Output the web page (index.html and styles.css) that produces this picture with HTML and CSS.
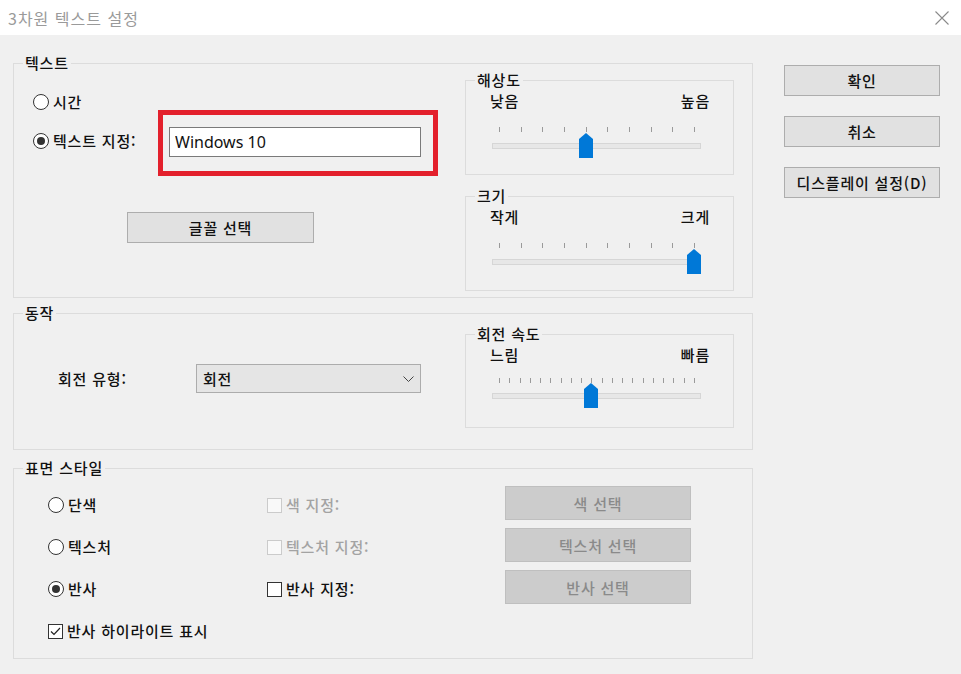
FILE: index.html
```html
<!DOCTYPE html>
<html lang="ko">
	<head>
		<meta charset="utf-8" />
		<title>3차원 텍스트 설정</title>
		<link rel="stylesheet" href="styles.css">
	</head>
	<body>
		<div class="titlebar">
			<span class="title">3차원 텍스트 설정</span>
			<svg class="close" width="14" height="14" viewBox="0 0 14 14"><path d="M0.5 0.5L13.5 13.5M13.5 0.5L0.5 13.5" stroke="#8a8a8a" stroke-width="1.1" fill="none"/></svg>
		</div>
		<div class="dialog">
			<div class="groups">
				<fieldset class="group g-text">
					<legend>텍스트</legend>
					<div class="group-body">
						<div class="text-left">
							<label class="radio r-time"><span class="mark"></span>시간</label>
							<div class="text-row">
								<label class="radio r-custom checked"><span class="mark"></span>텍스트 지정:</label>
								<div class="highlight"><input class="textbox" type="text" value="Windows 10"></div>
							</div>
							<button class="btn font-btn">글꼴 선택</button>
						</div>
						<div class="side-sliders">
							<fieldset class="group sub">
								<legend>해상도</legend>
								<div class="labels"><span>낮음</span><span>높음</span></div>
								<div class="ticks"><i></i><i></i><i></i><i></i><i></i><i></i><i></i><i></i><i></i><i></i></div>
								<div class="track"><svg class="thumb" style="--v: 0.4444" width="14" height="25" viewBox="0 0 14 25"><polygon points="0,6 7,0 14,6 14,25 0,25" fill="#0078d7"/></svg></div>
							</fieldset>
							<fieldset class="group sub sub-size">
								<legend>크기</legend>
								<div class="labels"><span>작게</span><span>크게</span></div>
								<div class="ticks"><i></i><i></i><i></i><i></i><i></i><i></i><i></i><i></i><i></i><i></i></div>
								<div class="track"><svg class="thumb" style="--v: 1" width="14" height="25" viewBox="0 0 14 25"><polygon points="0,6 7,0 14,6 14,25 0,25" fill="#0078d7"/></svg></div>
							</fieldset>
						</div>
					</div>
				</fieldset>

				<fieldset class="group g-motion">
					<legend>동작</legend>
					<div class="group-body">
						<div class="motion-left">
							<span class="motion-label">회전 유형:</span>
							<div class="select">
								<span>회전</span>
								<svg width="11" height="6" viewBox="0 0 11 6"><path d="M0.5 0.5L5.5 5.5L10.5 0.5" stroke="#444" stroke-width="1" fill="none"/></svg>
							</div>
						</div>
						<div class="side-sliders">
							<fieldset class="group sub sub-speed">
								<legend>회전 속도</legend>
								<div class="labels"><span>느림</span><span>빠름</span></div>
								<div class="ticks"><i></i><i></i><i></i><i></i><i></i><i></i><i></i><i></i><i></i><i></i><i></i><i></i><i></i><i></i><i></i><i></i><i></i><i></i><i></i><i></i></div>
								<div class="track"><svg class="thumb" style="--v: 0.4737" width="14" height="25" viewBox="0 0 14 25"><polygon points="0,6 7,0 14,6 14,25 0,25" fill="#0078d7"/></svg></div>
							</fieldset>
						</div>
					</div>
				</fieldset>

				<fieldset class="group g-surface">
					<legend>표면 스타일</legend>
					<div class="surface-grid">
						<label class="radio"><span class="mark"></span>단색</label>
						<label class="check disabled"><span class="box"></span>색 지정:</label>
						<button class="btn pick" disabled>색 선택</button>

						<label class="radio"><span class="mark"></span>텍스처</label>
						<label class="check disabled"><span class="box"></span>텍스처 지정:</label>
						<button class="btn pick" disabled>텍스처 선택</button>

						<label class="radio checked"><span class="mark"></span>반사</label>
						<label class="check"><span class="box"></span>반사 지정:</label>
						<button class="btn pick" disabled>반사 선택</button>

						<label class="check checked highlight-row"><span class="box"><svg width="13" height="13" viewBox="0 0 13 13"><path d="M2 6.5L5 9.5L11 3" stroke="#222" stroke-width="1.2" fill="none"/></svg></span>반사 하이라이트 표시</label>
					</div>
				</fieldset>
			</div>

			<div class="side">
				<button class="btn">확인</button>
				<button class="btn">취소</button>
				<button class="btn">디스플레이 설정(D)</button>
			</div>
		</div>
	</body>
</html>
```

FILE: styles.css
```css
body {
	margin: 0;
	background: #f0f0f0;
	font-family: "Noto Sans CJK KR", "Noto Sans", sans-serif;
	font-size: 15px;
	font-weight: 500;
	letter-spacing: 0.8px;
	color: #111;
}

.titlebar {
	height: 35px;
	background: #fff;
	display: flex;
	align-items: center;
	justify-content: space-between;
	padding: 0 12px 0 8px;
}

.title {
	color: #9a9a9a;
	font-size: 16px;
	font-weight: 400;
	letter-spacing: 1px;
}

.dialog {
	display: flex;
	gap: 31px;
	padding: 18px 0 0 13px;
}

.groups {
	width: 740px;
	display: flex;
	flex-direction: column;
}

.group {
	margin: 0;
	padding: 0;
	border: 1px solid #dcdcdc;
	box-sizing: border-box;
	min-width: 0;
}

legend {
	margin-left: 9px;
	padding: 0 2px;
	line-height: 20px;
}

.group-body {
	display: flex;
}

/* 텍스트 */
.g-text {
	height: 245px;
}

.text-left {
	width: 451px;
	padding-left: 19px;
	box-sizing: border-box;
}

.radio, .check {
	display: flex;
	align-items: center;
	gap: 4px;
	line-height: 20px;
}

.radio .mark {
	width: 16px;
	height: 16px;
	box-sizing: border-box;
	border: 1px solid #333;
	border-radius: 50%;
	background: #fff;
	display: flex;
	align-items: center;
	justify-content: center;
}

.radio.checked .mark::after {
	content: "";
	width: 8px;
	height: 8px;
	border-radius: 50%;
	background: #333;
}

.check .box {
	width: 15px;
	height: 15px;
	box-sizing: border-box;
	border: 1px solid #333;
	background: #fff;
	display: flex;
	align-items: center;
	justify-content: center;
}

.check.disabled {
	color: #a3a3a3;
}

.check.disabled .box {
	border-color: #cbcbcb;
	background: #f9f9f9;
}

.r-time {
	margin-top: 19px;
}

.text-row {
	display: flex;
	align-items: center;
	margin-top: -2px;
}

.r-custom {
	width: 125px;
	flex: none;
	margin-bottom: 4px;
}

.highlight {
	border: 5px solid #e3202c;
	padding: 12px 12px 14px 6px;
}

.textbox {
	display: block;
	width: 252px;
	height: 30px;
	box-sizing: border-box;
	border: 1px solid #7a7a7a;
	background: #fff;
	padding: 0 5px;
	margin: 0;
	font-family: "Noto Sans", sans-serif;
	font-size: 16px;
	font-weight: 400;
	letter-spacing: 0;
	color: #111;
}

.btn {
	font-family: inherit;
	font-size: 15px;
	font-weight: 500;
	letter-spacing: 0.8px;
	color: #111;
	background: #e1e1e1;
	border: 1px solid #adadad;
	height: 31px;
	padding: 0;
	margin: 0;
	box-sizing: border-box;
}

.font-btn {
	display: block;
	width: 187px;
	margin: 36px 0 0 94px;
}

/* sliders */
.side-sliders {
	width: 269px;
	margin-top: -3px;
}

.sub {
	height: 105px;
}

.sub-size {
	margin-top: 11px;
}

.labels {
	display: flex;
	justify-content: space-between;
	padding: 1px 23px 0 24px;
	line-height: 20px;
}

.ticks {
	display: flex;
	justify-content: space-between;
	height: 5px;
	margin: 16px 38px 0 33px;
}

.ticks i {
	width: 1px;
	background: #9a9a9a;
}

.track {
	position: relative;
	height: 6px;
	box-sizing: border-box;
	border: 1px solid #d6d6d6;
	background: #e7e7e7;
	margin: 11px 32px 0 26px;
}

.thumb {
	position: absolute;
	top: -11px;
	left: calc(var(--v) * 195px - 1px);
	display: block;
}

/* 동작 */
.g-motion {
	height: 147px;
	margin-top: 5px;
}

.motion-left {
	width: 451px;
	display: flex;
	align-items: center;
	align-self: flex-start;
	margin-top: 41px;
	padding-left: 44px;
	box-sizing: border-box;
}

.motion-label {
	width: 138px;
	flex: none;
}

.select {
	width: 225px;
	height: 29px;
	box-sizing: border-box;
	border: 1px solid #acacac;
	background: #e5e5e5;
	display: flex;
	align-items: center;
	justify-content: space-between;
	padding: 0 6px 0 6px;
}

.sub-speed {
	height: 104px;
	margin-top: 4px;
}

.sub-speed .ticks {
	margin-top: 13px;
}

.sub-speed .track {
	margin-top: 10px;
}

/* 표면 스타일 */
.g-surface {
	height: 201px;
	margin-top: 8px;
}

.surface-grid {
	display: grid;
	grid-template-columns: 219px 238px 186px;
	grid-auto-rows: 42px;
	align-items: center;
	padding: 6px 0 0 34px;
}

.pick {
	height: 34px;
	align-self: start;
	margin-top: 2px;
	background: #cccccc;
	border-color: #bfbfbf;
	color: #8a8a8a;
}

.highlight-row {
	grid-column: 1 / span 3;
}

/* 오른쪽 버튼 */
.side {
	width: 156px;
	display: flex;
	flex-direction: column;
	gap: 20px;
	padding-top: 12px;
}
```
